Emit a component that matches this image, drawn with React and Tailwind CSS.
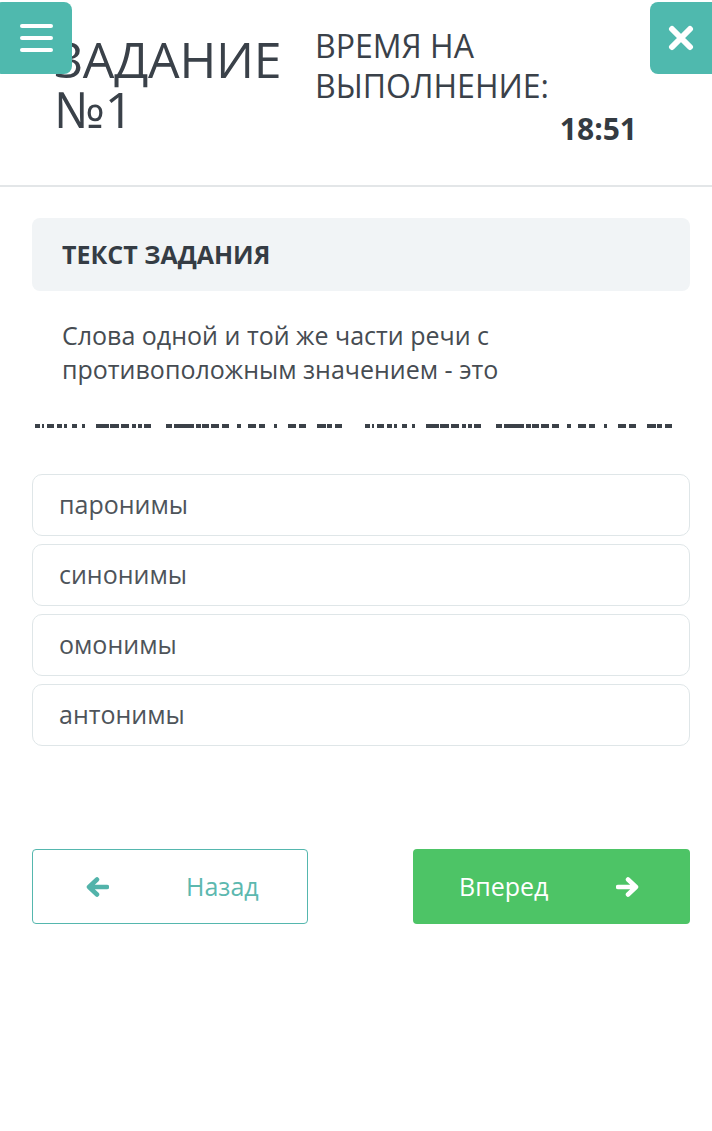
import React from 'react';

const dashes = [
  [0, 5], [7, 9], [12, 19], [22, 27], [29, 32], [37, 42], [47, 50],
  [61, 74], [75, 84], [86, 94], [97, 101], [103, 107], [109, 116],
  [131, 137], [139, 159], [161, 166], [167, 174], [176, 184], [187, 194],
  [202, 206], [213, 221], [224, 230], [239, 242], [253, 261], [264, 271],
  [282, 291], [292, 297], [300, 307],
];

function BlankLine() {
  return (
    <svg width="654" height="6" viewBox="0 0 654 6" className="block">
      {[0, 330].map((off) =>
        dashes.map(([a, b], i) => (
          <rect key={off + '-' + i} x={a + off} y="1" width={b - a} height="4" fill="#3b4148" />
        ))
      )}
    </svg>
  );
}

function ArrowIcon({ dir, color }) {
  return (
    <svg width="24" height="22" viewBox="0 0 24 22" style={{ transform: dir === 'left' ? 'scaleX(-1)' : 'none' }}>
      <path
        d="M2 11h17M12 3.5l8 7.5-8 7.5"
        fill="none"
        stroke={color}
        strokeWidth="4.5"
        strokeLinecap="round"
        strokeLinejoin="round"
      />
    </svg>
  );
}

const options = ['паронимы', 'синонимы', 'омонимы', 'антонимы'];

export default function App() {
  return (
    <div className="w-[712px] min-h-[1131px] bg-white text-[#3a4149] font-['Open_Sans',sans-serif]">
      {/* header */}
      <header className="relative h-[187px] border-b-2 border-[#e3e6e8] flex">
        <button className="absolute left-[-6px] top-[2px] w-[78px] h-[72px] rounded-[8px] bg-[#4fb9ae] flex flex-col items-center justify-center gap-[8px] pl-[6px]">
          <span className="block w-[33px] h-[4px] bg-white rounded-sm"></span>
          <span className="block w-[33px] h-[4px] bg-white rounded-sm"></span>
          <span className="block w-[33px] h-[4px] bg-white rounded-sm"></span>
        </button>
        <button className="absolute right-[-10px] top-[2px] w-[72px] h-[72px] rounded-[8px] bg-[#4fb9ae] flex items-center justify-center pr-[10px]">
          <svg width="26" height="26" viewBox="0 0 26 26">
            <path d="M4 4l18 18M22 4L4 22" stroke="white" strokeWidth="6" strokeLinecap="round" />
          </svg>
        </button>
        <div className="pl-[54px] pt-[34px] text-[50px] leading-[50px] tracking-[-0.3px] text-[#3a4149] w-[260px]">
          <div>ЗАДАНИЕ</div>
          <div>№1</div>
        </div>
        <div className="pl-[55px] pt-[26px] w-[385px]">
          <div className="text-[32px] leading-[40px] text-[#3a4149]">ВРЕМЯ НА<br />ВЫПОЛНЕНИЕ:</div>
          <div className="text-right pr-[8px] mt-[5px] text-[30px] leading-[36px] font-bold text-[#343b42]">18:51</div>
        </div>
      </header>

      <main className="pl-[32px] pr-[22px] pt-[31px]">
        <div className="h-[73px] rounded-[8px] bg-[#f1f4f6] flex items-center px-[30px]">
          <h2 className="text-[25px] font-bold text-[#353c44]">ТЕКСТ ЗАДАНИЯ</h2>
        </div>
        <p className="px-[30px] pt-[27px] text-[25px] leading-[34px] text-[#464c52]">
          Слова одной и той же части речи с<br />противоположным значением - это
        </p>
        <div className="pt-[37px] pl-[3px]">
          <BlankLine />
        </div>
        <div className="mt-[45px] flex flex-col gap-[8px]">
          {options.map((o) => (
            <div key={o} className="h-[62px] rounded-[10px] border border-[#dfe6e8] flex items-center px-[26px] text-[25px] text-[#4e545a]">
              {o}
            </div>
          ))}
        </div>

        <div className="mt-[103px] flex justify-between">
          <button className="w-[276px] h-[75px] rounded-[4px] border border-[#55b7ae] flex items-center pl-[52px]">
            <ArrowIcon dir="left" color="#52b3aa" />
            <span className="ml-[77px] text-[25px] text-[#5cb8af]">Назад</span>
          </button>
          <button className="w-[277px] h-[75px] rounded-[4px] bg-[#4dc466] flex items-center pl-[46px]">
            <span className="text-[25px] text-white">Вперед</span>
            <span className="ml-[68px] flex">
              <ArrowIcon dir="right" color="white" />
            </span>
          </button>
        </div>
      </main>
    </div>
  );
}
